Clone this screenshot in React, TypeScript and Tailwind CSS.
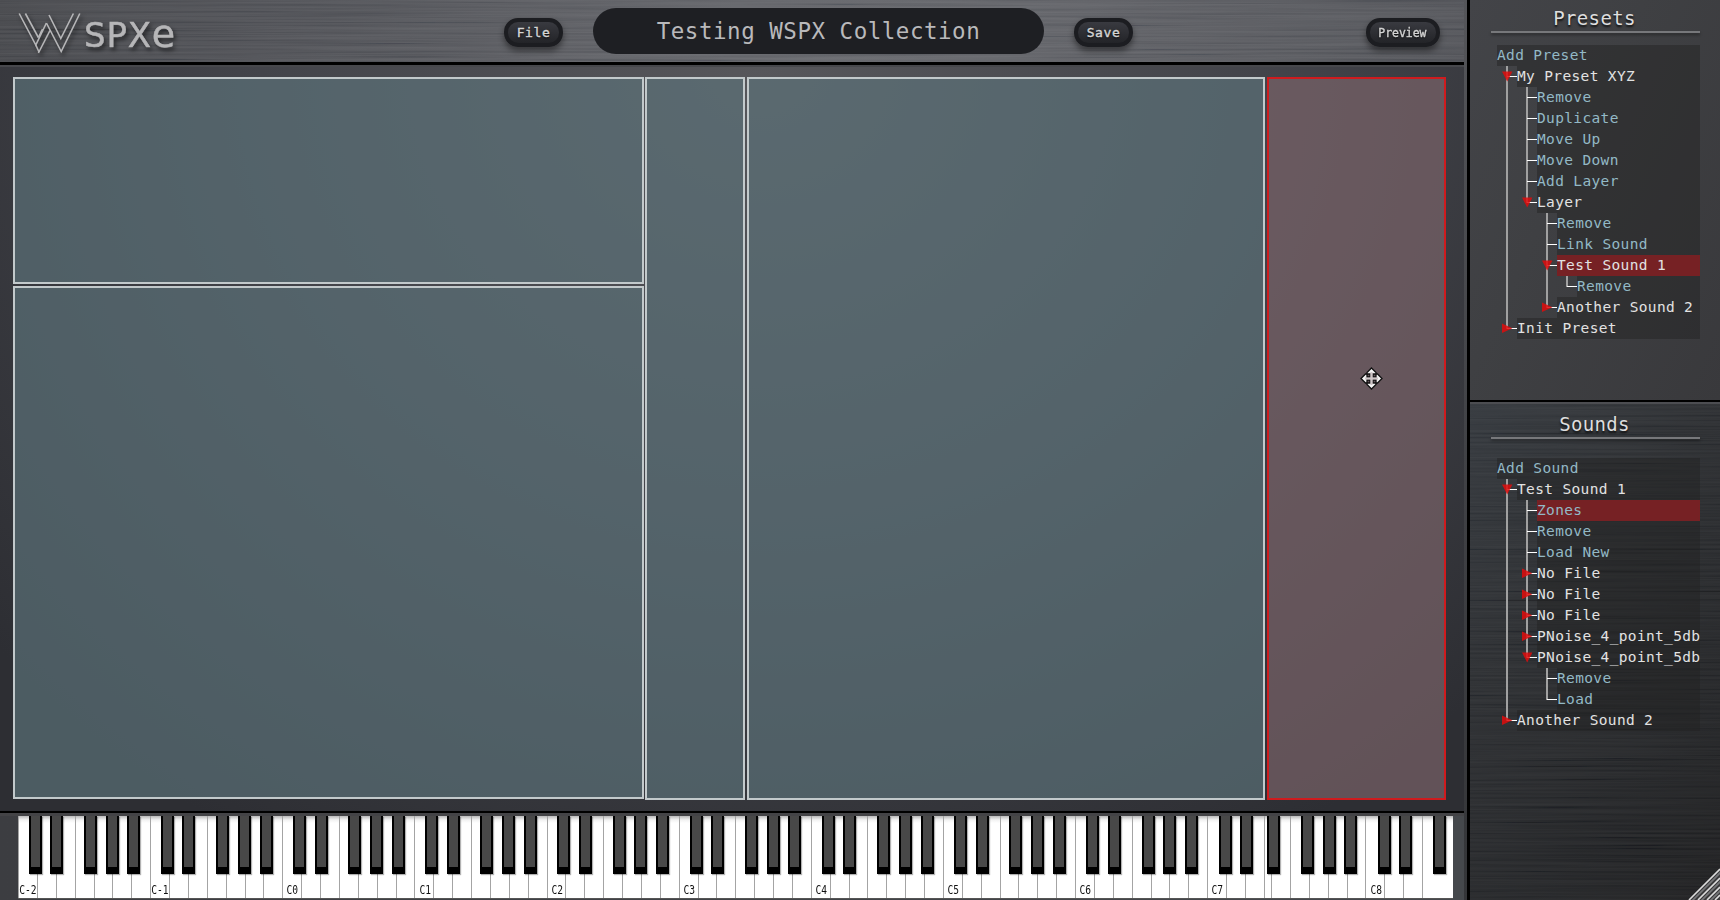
import React from 'react';

type Kind = 'action' | 'open' | 'closed';
interface TreeNode {
  label: string;
  kind: Kind;
  selected?: boolean;
  children?: TreeNode[];
}

const action = (label: string, selected = false): TreeNode => ({ label, kind: 'action', selected });
const closed = (label: string): TreeNode => ({ label, kind: 'closed' });
const open = (label: string, children: TreeNode[], selected = false): TreeNode => ({
  label,
  kind: 'open',
  selected,
  children,
});

const presets: TreeNode[] = [
  open('My Preset XYZ', [
    action('Remove'),
    action('Duplicate'),
    action('Move Up'),
    action('Move Down'),
    action('Add Layer'),
    open('Layer', [
      action('Remove'),
      action('Link Sound'),
      open('Test Sound 1', [action('Remove')], true),
      closed('Another Sound 2'),
    ]),
  ]),
  closed('Init Preset'),
];

const sounds: TreeNode[] = [
  open('Test Sound 1', [
    action('Zones', true),
    action('Remove'),
    action('Load New'),
    closed('No File'),
    closed('No File'),
    closed('No File'),
    closed('PNoise_4_point_5db'),
    open('PNoise_4_point_5db', [action('Remove'), action('Load')]),
  ]),
  closed('Another Sound 2'),
];

function Brushed({ id, opacity }: { id: string; opacity: string }) {
  return (
    <svg className={`pointer-events-none absolute inset-0 h-full w-full ${opacity}`} aria-hidden="true">
      <filter id={id} x="0" y="0" width="100%" height="100%">
        <feTurbulence type="fractalNoise" baseFrequency="0.004 0.45" numOctaves={3} seed={7} />
        <feColorMatrix values="1.6 0 0 0 -0.35  1.6 0 0 0 -0.33  1.6 0 0 0 -0.3  0 0 0 0 1" />
      </filter>
      <rect width="100%" height="100%" filter={`url(#${id})`} />
    </svg>
  );
}

function Branch({ node, last }: { node: TreeNode; last: boolean }) {
  const tone = node.kind === 'action' ? 'text-[#93b9c6]' : 'text-[#e2e2e2]';
  const fill = node.selected ? 'bg-[#762124]' : 'bg-[#222222]/45';
  return (
    <li className="relative pl-5">
      <span
        className={`absolute left-[9px] top-0 w-[2px] bg-[#a0a0a0] ${last ? 'h-[11px]' : 'h-full'}`}
      />
      <span className="absolute left-[10px] top-[10px] h-px w-[10px] bg-white" />
      {node.kind !== 'action' && (
        <svg className="absolute left-[5px] top-[5px] h-[11px] w-[11px]" viewBox="0 0 11 11">
          <path
            d={node.kind === 'open' ? 'M0 0.5H10.4L5.2 10.5Z' : 'M0 0.5V10L10.4 5.3Z'}
            fill="#e00c0c"
            fillOpacity="0.85"
          />
        </svg>
      )}
      <div className={`h-[21px] whitespace-nowrap leading-[20px] ${fill} ${tone}`}>{node.label}</div>
      {node.children && <Branches nodes={node.children} />}
    </li>
  );
}

function Branches({ nodes }: { nodes: TreeNode[] }) {
  return (
    <ul>
      {nodes.map((node, i) => (
        <Branch key={i} node={node} last={i === nodes.length - 1} />
      ))}
    </ul>
  );
}

function Tree({ add, nodes }: { add: string; nodes: TreeNode[] }) {
  return (
    <div className="ml-[6px] text-[14.5px] tracking-[0.35px]">
      <div className="h-[21px] bg-[#222222]/45 leading-[20px] text-[#93b9c6]">{add}</div>
      <Branches nodes={nodes} />
    </div>
  );
}

function PillButton({ label, wide }: { label: string; wide?: boolean }) {
  return (
    <button
      className={`flex h-[29px] items-center justify-center rounded-[14px] border-[4px] border-[#1c1d21] bg-linear-to-b from-[#393a40] to-[#232428] text-[13px] leading-none text-[#d4d4d4] shadow-[0_4px_6px_rgba(0,0,0,0.45)] ${
        wide ? 'w-[74px]' : 'w-[59px]'
      }`}
    >
      <span
        className={`[-webkit-text-stroke:0.4px_#d4d4d4] [text-shadow:0_1px_2px_#000] ${
          wide ? '-ml-[2px] scale-x-[0.88]' : 'tracking-[0.6px]'
        }`}
      >
        {label}
      </span>
    </button>
  );
}

function Logo() {
  return (
    <div className="flex w-[160px] items-start drop-shadow-[2px_3px_2px_rgba(0,0,0,0.55)]">
      <svg className="ml-[1px] mt-[12px] h-[44px] w-[66px] shrink-0" viewBox="0 0 66 44" fill="none" stroke="#b6b6b8" strokeWidth="1.6">
        <path d="M1.2 1.5L17.8 33L28.4 11" />
        <path d="M7.4 1.5L20.4 25.5" />
        <path d="M20.4 41L32 18.5" />
        <path d="M17.8 33L21 40" />
        <path d="M20.4 25.5L24.5 17" />
        <path d="M31 3L42.8 26.5L55.4 1.5" />
        <path d="M28.4 11L43.2 39.5L61.8 1.5" />
      </svg>
      <span className="mt-[11px] flex items-baseline font-['DejaVu_Sans'] text-[34px] leading-[46px] tracking-[0.8px] text-[#b6b6b8] [-webkit-text-stroke:0.5px_#b6b6b8]">
        SPX<span className="text-[38px] leading-[46px]">e</span>
      </span>
    </div>
  );
}

function Header() {
  return (
    <header className="relative h-[62px] bg-[linear-gradient(100deg,#434448_0%,#4d4e53_18%,#616267_50%,#606166_70%,#505156_100%)]">
      <Brushed id="brushed-header" opacity="opacity-[0.09]" />
      <div className="relative flex h-full items-start pl-[17px] pr-[24px]">
        <Logo />
        <div className="ml-[327px] mt-[18px]">
          <PillButton label="File" />
        </div>
        <h1 className="ml-[30px] mt-[8px] h-[46px] w-[451px] rounded-full bg-[#1e1f23] text-center text-[22.5px] leading-[46px] tracking-[0.52px] text-[#b9b9bb]">
          Testing WSPX Collection
        </h1>
        <div className="ml-[30px] mt-[18px]">
          <PillButton label="Save" />
        </div>
        <div className="ml-auto mt-[18px]">
          <PillButton label="Preview" wide />
        </div>
      </div>
    </header>
  );
}

const zone = 'border-2 border-[#c2c9cb] bg-[rgba(92,115,123,0.67)]';

function Zones() {
  return (
    <main className="relative flex h-[744px] bg-[radial-gradient(ellipse_1000px_900px_at_52%_0%,#57575b_0%,#43444a_50%,#2d2e33_100%)] pl-[13px] pt-[10px]">
      <div className="flex w-[631px] flex-col gap-[2px]">
        <div className={`h-[207px] ${zone}`} />
        <div className={`h-[513px] ${zone}`} />
      </div>
      <div className={`ml-px h-[723px] w-[100px] ${zone}`} />
      <div className={`ml-[2px] h-[723px] w-[518px] ${zone}`} />
      <div className="ml-[2px] flex h-[723px] w-[179px] items-start border-2 border-[#cf1b1e] bg-[rgba(124,100,106,0.68)]">
        <svg className="ml-[91px] mt-[288px] h-[23px] w-[23px]" viewBox="0 0 23 23">
          <path
            d="M11.5 1L16 5.5V7H13V10H16V7H17.5L22 11.5L17.5 16H16V13H13V16H16V17.5L11.5 22L7 17.5V16H10V13H7V16H5.5L1 11.5L5.5 7H7V10H10V7H7V5.5Z"
            fill="#f4f4f4"
            stroke="#111"
            strokeWidth="1.3"
          />
          <path d="M11.5 5V18M5 11.5H18" stroke="#cfc6c8" strokeWidth="2" />
        </svg>
      </div>
    </main>
  );
}

const OCTAVE = 132.22;
const KEY = OCTAVE / 7;
const BLACK_OFFSETS = [10.6, 32.1, 65.8, 87.6, 109.3];

const labels = ['C-2', 'C-1', 'C0', 'C1', 'C2', 'C3', 'C4', 'C5', 'C6', 'C7'];

const whiteKeys: { width: number; label?: string }[] = [];
for (let i = 0; i < 66; i++) {
  whiteKeys.push({ width: KEY, label: i % 7 === 0 ? labels[i / 7] : undefined });
}
whiteKeys.push({ width: 7.3 });
for (let i = 0; i < 9; i++) {
  whiteKeys.push({ width: i === 8 ? 29 : KEY, label: i === 5 ? 'C8' : undefined });
}

const blackKeys: number[] = [];
for (let o = 0; o < 9; o++) BLACK_OFFSETS.forEach((x) => blackKeys.push(o * OCTAVE + x));
[1219, 1240, 1267, 1301, 1322.6, 1344, 1378, 1399.3, 1433].forEach((x) => blackKeys.push(x - 18));

function Keyboard() {
  return (
    <section className="relative h-[84px] bg-linear-to-r from-[#3c3d41] to-[#45484c] pl-[18px]">
      <div className="relative h-[84px] w-[1435px]">
        <div className="flex h-[83px] w-[1435px] overflow-hidden border-b border-[#555] bg-[linear-gradient(to_bottom,#bbb_0,#f2f2f2_4px,#fff_7px)]">
          {whiteKeys.map((k, i) => (
            <div
              key={i}
              style={{ width: k.width }}
              className="flex shrink-0 items-end justify-center border-l border-[#a4a4a4]"
            >
              {k.label && (
                <span
                  className={`shrink-0 whitespace-nowrap text-[12px] leading-[16px] text-[#111] ${
                    k.label.length > 2 ? 'scale-x-[0.8]' : 'ml-[1px] scale-x-[0.8]'
                  }`}
                >
                  {k.label}
                </span>
              )}
            </div>
          ))}
        </div>
        {blackKeys.map((x, i) => (
          <div
            key={i}
            style={{ left: x }}
            className="absolute top-0 h-[58px] w-[13px] border-x-2 border-b-[7px] border-black bg-[#484848] shadow-[1px_1px_1px_rgba(0,0,0,0.3)]"
          />
        ))}
      </div>
    </section>
  );
}

function PanelTitle({ children }: { children: React.ReactNode }) {
  return (
    <div>
      <h2 className="h-[21px] pr-[2px] text-center text-[19px] leading-[16px] tracking-[0.35px] text-[#dedede] [text-shadow:0_2px_2px_#111]">
        {children}
      </h2>
      <div className="h-[2px] bg-[#77787b] shadow-[0_2px_3px_rgba(0,0,0,0.4)]" />
    </div>
  );
}

export default function App() {
  return (
    <div className="flex h-[900px] w-[1720px] overflow-hidden bg-[#2a2b2e] font-['DejaVu_Sans_Mono',monospace]">
      <div className="flex w-[1464px] flex-col">
        <Header />
        <div className="h-[3px] bg-black" />
        <div className="h-[2px] bg-[#47484c]" />
        <Zones />
        <div className="h-[2px] bg-black" />
        <div className="h-[3px] bg-[#434346]" />
        <Keyboard />
      </div>
      <div className="w-[3px] bg-linear-to-b from-[#55565a] via-[#414246] to-[#343538]" />
      <div className="w-[3px] bg-black" />
      <aside className="flex w-[250px] flex-col">
        <section className="h-[400px] bg-[linear-gradient(115deg,#434448_0%,#3f4043_40%,#39393c_100%)] pl-[21px] pr-[20px] pt-[10px]">
          <div className="h-[35px]">
            <PanelTitle>Presets</PanelTitle>
          </div>
          <Tree add="Add Preset" nodes={presets} />
        </section>
        <div className="h-[2px] bg-black" />
        <section className="relative h-[498px] border-t-2 border-[#4c4d51] bg-[linear-gradient(130deg,#31353a_0%,#292b2e_35%,#202123_75%,#1b1b1c_100%)]">
          <Brushed id="brushed-sounds" opacity="opacity-[0.065]" />
          <div className="relative pl-[21px] pr-[20px] pt-[12px]">
            <div className="h-[42px]">
              <PanelTitle>Sounds</PanelTitle>
            </div>
            <Tree add="Add Sound" nodes={sounds} />
          </div>
          <svg className="absolute bottom-0 right-0 h-[32px] w-[32px]" viewBox="0 0 32 32">
            <path d="M1 32L32 1V32Z" fill="#3a3a3c" />
            <path d="M1 32L32 1M10 32L32 10M19 32L32 19M27 32L32 27" stroke="#dcdcdc" strokeWidth="1.6" />
            <path d="M4 33L33 4M13 33L33 13M22 33L33 22" stroke="#77787a" strokeWidth="1.6" />
          </svg>
        </section>
      </aside>
    </div>
  );
}
